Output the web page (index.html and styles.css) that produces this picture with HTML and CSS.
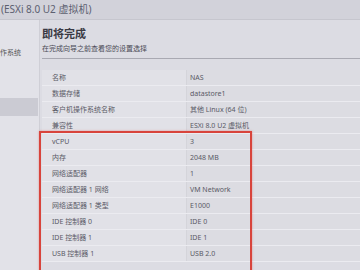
FILE: index.html
```html
<!DOCTYPE html>
<html>
<head>
<meta charset="utf-8">
<link rel="stylesheet" href="styles.css">
</head>
<body>
<div class="page">
  <div class="header">(ESXi 8.0 U2 虚拟机)</div>
  <div class="body">
    <div class="sidebar">
      <div class="side-item first">作系统</div>
      <div class="side-item selected"></div>
    </div>
    <div class="main">
      <div class="title">即将完成</div>
      <div class="subtitle">在完成向导之前查看您的设置选择</div>
      <div class="rule"></div>
      <div class="table">
        <div class="row"><div class="label">名称</div><div class="value">NAS</div></div>
        <div class="row"><div class="label">数据存储</div><div class="value">datastore1</div></div>
        <div class="row"><div class="label">客户机操作系统名称</div><div class="value">其他 Linux (64 位)</div></div>
        <div class="row"><div class="label">兼容性</div><div class="value">ESXi 8.0 U2 虚拟机</div></div>
        <div class="group">
          <div class="row"><div class="label">vCPU</div><div class="value">3</div></div>
          <div class="row"><div class="label">内存</div><div class="value">2048 MB</div></div>
          <div class="row"><div class="label">网络适配器</div><div class="value">1</div></div>
          <div class="row"><div class="label">网络适配器 1 网络</div><div class="value">VM Network</div></div>
          <div class="row"><div class="label">网络适配器 1 类型</div><div class="value">E1000</div></div>
          <div class="row"><div class="label">IDE 控制器 0</div><div class="value">IDE 0</div></div>
          <div class="row"><div class="label">IDE 控制器 1</div><div class="value">IDE 1</div></div>
          <div class="row"><div class="label">USB 控制器 1</div><div class="value">USB 2.0</div></div>
          <div class="redbox"></div>
        </div>
      </div>
    </div>
  </div>
</div>
</body>
</html>
```
FILE: styles.css
```css
html, body {
  margin: 0;
  padding: 0;
}
body {
  width: 360px;
  height: 270px;
  overflow: hidden;
  background: #dcdce3;
  font-family: "Noto Sans", "Noto Sans CJK SC", sans-serif;
  color: #555;
}
.page {
  display: flex;
  flex-direction: column;
  height: 270px;
}
.header {
  height: 20px;
  box-sizing: border-box;
  background: #d2d2da;
  font-size: 10px;
  line-height: 18px;
  padding-left: 1px;
  color: #5c6070;
  border-bottom: 1px solid #c6c6ce;
}
.body {
  display: flex;
  flex: 1;
}
.sidebar {
  width: 40px;
  background: #e2e2e8;
  border-right: 1px solid #cfcfd6;
  padding-top: 27px;
  box-sizing: border-box;
}
.side-item {
  font-size: 7px;
  line-height: 12px;
  color: #555;
  white-space: nowrap;
}
.side-item.first {
  height: 12px;
}
.side-item.selected {
  margin-top: 39px;
  height: 18px;
  width: 38px;
  background: #cbcbd3;
}
.main {
  flex: 1;
  padding-left: 2px;
  padding-top: 7px;
  min-width: 0;
}
.title {
  font-size: 11px;
  font-weight: bold;
  color: #3a3a44;
  line-height: 14px;
}
.subtitle {
  font-size: 7px;
  line-height: 12px;
  margin-top: 2px;
  color: #4a4a55;
}
.rule {
  height: 1px;
  background: #a9a9b2;
  margin-top: 3px;
}
.table {
  margin-top: 11px;
  background: #e1e1e7;
}
.group {
  position: relative;
}
.row {
  display: flex;
  height: 16px;
  box-sizing: border-box;
  border-bottom: 1px solid #ebebf0;
  font-size: 7px;
  line-height: 15px;
}
.label {
  width: 144px;
  padding-left: 10px;
  box-sizing: border-box;
  white-space: nowrap;
  color: #5a5a66;
}
.value {
  flex: 1;
  padding-left: 3px;
  white-space: nowrap;
  color: #5a5a66;
  background: #dcdce2;
  border-left: 1px solid #d4d4da;
}
.redbox {
  position: absolute;
  left: -3px;
  top: -3px;
  width: 213px;
  height: 143px;
  box-sizing: border-box;
  border: 2px solid #d8443c;
  box-shadow: 0 0 2px rgba(220, 80, 70, 0.5);
  pointer-events: none;
}
```
